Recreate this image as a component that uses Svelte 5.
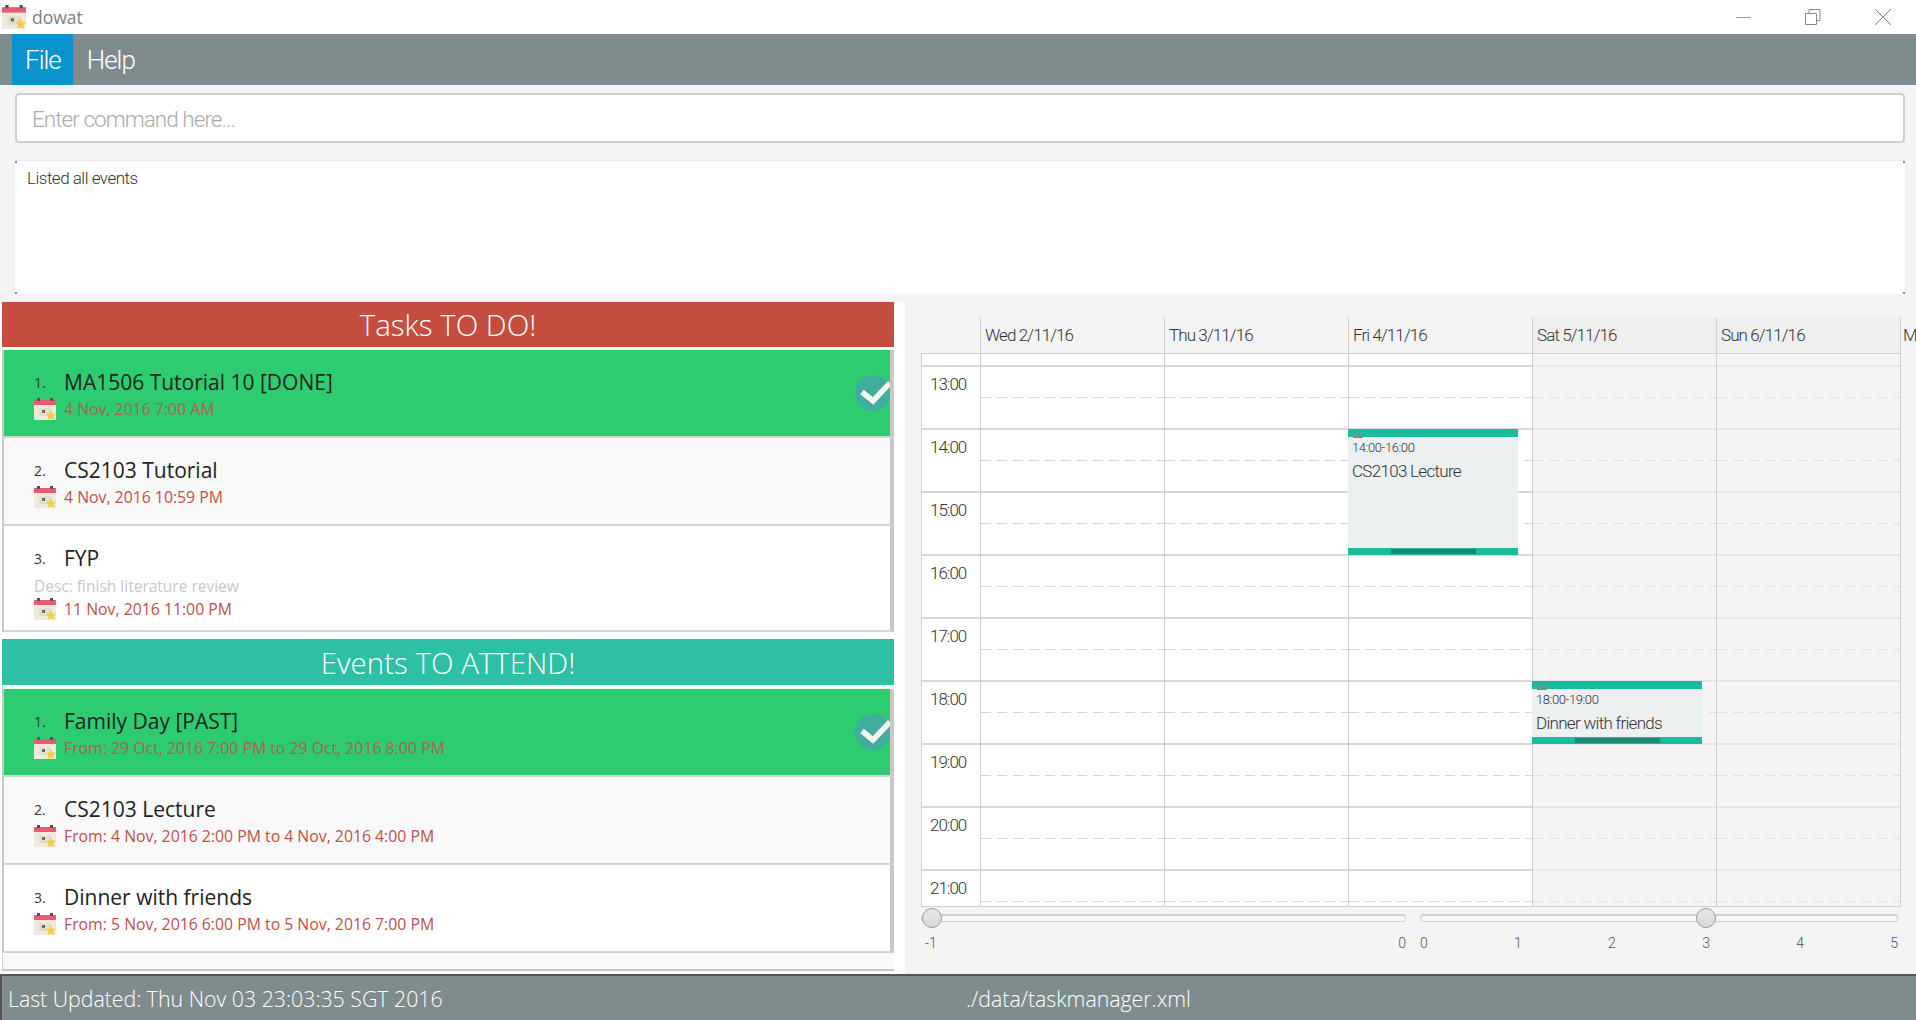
<script>
	const tasks = [
		{ n: 1, title: 'MA1506 Tutorial 10 [DONE]', date: '4 Nov, 2016 7:00 AM', done: true },
		{ n: 2, title: 'CS2103 Tutorial', date: '4 Nov, 2016 10:59 PM' },
		{ n: 3, title: 'FYP', desc: 'Desc: finish literature review', date: '11 Nov, 2016 11:00 PM' }
	];
	const events = [
		{ n: 1, title: 'Family Day [PAST]', date: 'From: 29 Oct, 2016 7:00 PM to 29 Oct, 2016 8:00 PM', done: true },
		{ n: 2, title: 'CS2103 Lecture', date: 'From: 4 Nov, 2016 2:00 PM to 4 Nov, 2016 4:00 PM' },
		{ n: 3, title: 'Dinner with friends', date: 'From: 5 Nov, 2016 6:00 PM to 5 Nov, 2016 7:00 PM' }
	];
	const days = [
		{ label: 'Wed 2/11/16' },
		{ label: 'Thu 3/11/16' },
		{ label: 'Fri 4/11/16' },
		{ label: 'Sat 5/11/16', weekend: true },
		{ label: 'Sun 6/11/16', weekend: true }
	];
	const hours = ['13:00', '14:00', '15:00', '16:00', '17:00', '18:00', '19:00', '20:00', '21:00'];
	const HOUR = 63;
	const DAY = 184;
	const appts = [
		{ day: 2, start: 1, span: 2, time: '14:00-16:00', title: 'CS2103 Lecture' },
		{ day: 3, start: 5, span: 1, time: '18:00-19:00', title: 'Dinner with friends' }
	];
</script>

{#snippet calIcon(size)}
	<svg class="cal" width={size} height={size} viewBox="0 0 22 22">
		<rect x="0" y="3" width="22" height="19" fill="#eeebdd" />
		<rect x="0" y="2" width="22" height="5" fill="#ea5a70" />
		<rect x="3" y="0" width="3" height="3" fill="#59504a" />
		<rect x="16" y="0" width="3" height="3" fill="#59504a" />
		<rect x="5" y="10" width="12" height="8" fill="#e3dfcf" />
		<rect x="8" y="12" width="3" height="3" fill="#6f6a5c" />
		<polygon points="17,12 18.6,15.4 22,16 19.6,18.4 20.2,22 17,20.3 13.8,22 14.4,18.4 12,16 15.4,15.4" fill="#f6cc4a" />
	</svg>
{/snippet}

{#snippet card(item)}
	<div class="card" class:done={item.done} class:even={item.n === 2}>
		<div class="head">
			<span class="num">{item.n}.</span>
			<span class="title">{item.title}</span>
		</div>
		{#if item.desc}
			<div class="desc">{item.desc}</div>
		{/if}
		<div class="when">
			{@render calIcon(22)}
			<span class="date">{item.date}</span>
		</div>
		{#if item.done}
			<div class="check">
				<svg width="36" height="36" viewBox="0 0 36 36">
					<path d="M7 17 L18 26 L35 8" fill="none" stroke="#f4f4f0" stroke-width="5.5" />
				</svg>
			</div>
		{/if}
	</div>
{/snippet}

<div class="app">
	<div class="titlebar">
		<div class="brand">
			{@render calIcon(24)}
			<span>dowat</span>
		</div>
		<div class="winctl">
			<svg width="16" height="16" viewBox="0 0 16 16"><path d="M0 8.5H15" stroke="#999" fill="none" /></svg>
			<svg width="16" height="16" viewBox="0 0 16 16"><path d="M0.5 4.5H11.5V15.5H0.5ZM4 4V0.5H15V11.5H12" stroke="#888" fill="none" /></svg>
			<svg width="18" height="18" viewBox="0 0 18 18"><path d="M1 1L17 17M17 1L1 17" stroke="#888" fill="none" /></svg>
		</div>
	</div>

	<div class="menubar">
		<span class="menu active">File</span>
		<span class="menu">Help</span>
	</div>

	<div class="command">
		<input placeholder="Enter command here..." />
	</div>
	<div class="result">Listed all events</div>

	<div class="main">
		<div class="lists">
			<div class="banner red">Tasks TO DO!</div>
			<div class="list">
				{#each tasks as t}
					{@render card(t)}
				{/each}
			</div>
			<div class="banner teal">Events TO ATTEND!</div>
			<div class="list last">
				{#each events as e}
					{@render card(e)}
				{/each}
			</div>
		</div>

		<div class="calendar">
			<div class="dayhead">
				{#each days as d}
					<div class="dayname" class:weekend={d.weekend}>{d.label}</div>
				{/each}
				<div class="dayname cut">M</div>
			</div>
			<div class="grid">
				<div class="timecol">
					<div class="lead"></div>
					{#each hours as h}
						<div class="hour">{h}</div>
					{/each}
				</div>
				{#each days as d}
					<div class="daycol" class:weekend={d.weekend}>
						<div class="lead"></div>
						{#each hours as h}
							<div class="slot"><i></i></div>
						{/each}
					</div>
				{/each}
				{#each appts as a}
					<div
						class="appt"
						style="left: {58 + a.day * DAY}px; top: {12 + a.start * HOUR}px; height: {a.span * HOUR}px"
					>
						<span class="grip"></span>
						<div class="atime">{a.time}</div>
						<div class="aname">{a.title}</div>
						<span class="handle"></span>
					</div>
				{/each}
			</div>
			<div class="sliders">
				<div class="slider">
					<div class="track"><span class="thumb" style="left: 0px"></span></div>
					<div class="ticks first"><span>-1</span><span>0</span></div>
				</div>
				<div class="slider">
					<div class="track"><span class="thumb" style="left: 275px"></span></div>
					<div class="ticks">
						{#each [0, 1, 2, 3, 4, 5] as n}
							<span>{n}</span>
						{/each}
					</div>
				</div>
			</div>
		</div>
	</div>

	<div class="status">
		<span>Last Updated: Thu Nov 03 23:03:35 SGT 2016</span>
		<span>./data/taskmanager.xml</span>
	</div>
</div>

<style>
	:global(body) {
		margin: 0;
		background: #f4f4f4;
	}

	.app {
		width: 1916px;
		height: 1020px;
		display: flex;
		flex-direction: column;
		overflow: hidden;
		background: #f4f4f4;
		font-family: 'Open Sans', sans-serif;
	}

	.titlebar {
		height: 34px;
		background: #fff;
		display: flex;
		justify-content: space-between;
		align-items: center;
		flex: none;
	}

	.brand {
		display: flex;
		align-items: center;
		gap: 6px;
		padding-left: 2px;
		font-size: 17.5px;
		color: #808080;
	}

	.winctl {
		display: flex;
		align-items: center;
		gap: 53px;
		padding-right: 24px;
	}

	.menubar {
		height: 51px;
		flex: none;
		background: #7f8c8d;
		display: flex;
		padding-left: 12px;
		font-family: Roboto, sans-serif;
		font-weight: 300;
		font-size: 26px;
		letter-spacing: -1px;
		color: #fff;
	}

	.menu {
		display: flex;
		align-items: center;
		padding: 1px 14px 0;
	}

	.menu.active {
		background: #0a93cd;
		padding: 1px 12px 0 13px;
	}

	.command {
		flex: none;
		padding: 8px 11px 0 15px;
	}

	.command input {
		box-sizing: border-box;
		display: block;
		width: 100%;
		height: 50px;
		border: 2px solid #cfcfcf;
		border-radius: 4px;
		background: #fff;
		padding: 2px 15px 0;
		outline: none;
		font-family: Roboto, sans-serif;
		font-weight: 300;
		font-size: 22.5px;
		letter-spacing: -0.95px;
	}

	.command input::placeholder {
		color: #ababab;
		opacity: 1;
	}

	.result {
		flex: none;
		box-sizing: border-box;
		height: 134px;
		margin: 17px 11px 0 15px;
		padding: 7px 12px;
		background:
			linear-gradient(#8a8a8a, #8a8a8a) 0 0 / 2px 2px no-repeat,
			linear-gradient(#8a8a8a, #8a8a8a) 100% 0 / 2px 2px no-repeat,
			linear-gradient(#8a8a8a, #8a8a8a) 0 100% / 2px 2px no-repeat,
			linear-gradient(#8a8a8a, #8a8a8a) 100% 100% / 2px 2px no-repeat,
			#fff;
		border-top: 1px solid #eaeaea;
		font-family: Roboto, sans-serif;
		font-weight: 300;
		font-size: 17px;
		letter-spacing: -0.5px;
		color: #333;
	}

	.main {
		flex: 1;
		min-height: 0;
		display: flex;
	}

	.lists {
		width: 905px;
		flex: none;
		box-sizing: border-box;
		margin-top: 8px;
		padding: 0 11px 0 2px;
		background: #fff;
	}

	.banner {
		height: 45px;
		display: flex;
		align-items: center;
		justify-content: center;
		color: #fff;
		font-size: 29.5px;
		font-weight: 300;
	}

	.red {
		background: #c44d40;
	}

	.teal {
		height: 46px;
		background: #2ec0a4;
	}

	.list {
		padding-top: 3px;
		margin-bottom: 7px;
		background: #fff;
	}

	.list.last {
		margin-bottom: 0;
		padding-top: 4px;
		height: 286px;
		box-sizing: border-box;
		background: #f9f9f9;
		border-left: 1px solid #d0d0d0;
		border-bottom: 2px solid #c8c8c8;
	}

	.card {
		position: relative;
		box-sizing: border-box;
		min-height: 88px;
		padding: 17px 0 9px 30px;
		background: #fff;
		border-left: 2px solid #c8c8c8;
		border-right: 4px solid #c8c8c8;
		border-bottom: 2px solid #d4d4d4;
		overflow: hidden;
	}

	.list.last .card {
		margin-left: -1px;
	}

	.card.even {
		background: #f9f9f9;
	}

	.card.done {
		background: #2ecc71;
	}

	.head {
		display: flex;
		align-items: center;
		height: 30px;
	}

	.num {
		width: 30px;
		font-size: 14px;
		color: #333;
	}

	.title {
		font-size: 21px;
		color: #222;
	}

	.desc {
		height: 24px;
		line-height: 26px;
		font-size: 15.5px;
		color: #c8c8c8;
	}

	.when {
		display: flex;
		align-items: center;
		gap: 8px;
		height: 24px;
	}

	.cal {
		display: block;
		flex: none;
	}

	.date {
		font-size: 15.8px;
		color: #c0504a;
	}

	.done .date {
		color: #a4674d;
	}

	.check {
		position: absolute;
		right: -1px;
		top: 25px;
		width: 36px;
		height: 36px;
		border-radius: 50%;
		background: #3fae9c;
	}

	.check svg {
		display: block;
	}

	.calendar {
		flex: 1;
		min-width: 0;
		padding: 23px 0 0 16px;
		font-family: Roboto, sans-serif;
		font-weight: 300;
	}

	.dayhead {
		display: flex;
		height: 36px;
		padding-left: 59px;
		white-space: nowrap;
	}

	.dayname {
		box-sizing: border-box;
		width: 184px;
		flex: none;
		padding: 8px 0 0 4px;
		border-left: 1px solid #d0d0d0;
		font-size: 17px;
		letter-spacing: -0.9px;
		color: #333;
	}

	.dayname.weekend {
		background: #efefef;
	}

	.dayname.cut {
		width: 15px;
		padding-left: 2px;
	}

	.grid {
		position: relative;
		display: flex;
		width: 980px;
		box-sizing: border-box;
		height: 554px;
		border: 1px solid #cfcfcf;
		background: #fff;
		overflow: hidden;
	}

	.timecol {
		width: 58px;
		flex: none;
	}

	.lead {
		height: 11px;
		border-bottom: 2px solid #d8d8d8;
	}

	.hour {
		box-sizing: border-box;
		height: 63px;
		padding: 7px 0 0 8px;
		border-bottom: 2px solid #d8d8d8;
		font-size: 17px;
		letter-spacing: -1px;
		color: #333;
	}

	.daycol {
		box-sizing: border-box;
		width: 184px;
		flex: none;
		border-left: 1px solid #d0d0d0;
	}

	.daycol.weekend {
		background: #f4f4f4;
	}

	.daycol.weekend .lead,
	.daycol.weekend .slot {
		border-bottom-color: #e6e6e6;
	}

	.slot {
		box-sizing: border-box;
		height: 63px;
		padding-top: 30px;
		border-bottom: 2px solid #d8d8d8;
	}

	.slot i {
		display: block;
		height: 1px;
		background: repeating-linear-gradient(90deg, #d6d6d6 0 10px, transparent 10px 16px);
	}

	.weekend .slot i {
		background: repeating-linear-gradient(90deg, #e2e2e2 0 10px, transparent 10px 16px);
	}

	.appt {
		position: absolute;
		box-sizing: border-box;
		width: 170px;
		padding: 3px 0 0 4px;
		background: #ecf0f1;
		border-top: 8px solid #1abc9c;
		border-bottom: 7px solid #1abc9c;
		color: #333;
	}

	.grip {
		position: absolute;
		left: 5px;
		top: -3px;
		width: 10px;
		height: 4px;
		background: #5f9c8f;
	}

	.handle {
		position: absolute;
		left: 43px;
		bottom: -6px;
		width: 85px;
		height: 5px;
		background: #168a72;
	}

	.atime {
		font-size: 13px;
		letter-spacing: -0.4px;
		line-height: 16px;
	}

	.aname {
		margin-top: 4px;
		font-size: 17px;
		letter-spacing: -0.7px;
		line-height: 22px;
	}

	.sliders {
		display: flex;
		gap: 14px;
		width: 977px;
		margin-top: 4px;
	}

	.slider {
		flex: none;
		width: 485px;
	}

	.slider + .slider {
		width: 478px;
	}

	.track {
		position: relative;
		box-sizing: border-box;
		height: 8px;
		margin-top: 3px;
		border: 1px solid #cfcfcf;
		border-top-width: 2px;
		border-radius: 4px;
		background: #f7f7f7;
	}

	.thumb {
		position: absolute;
		top: -8px;
		width: 20px;
		height: 20px;
		box-sizing: border-box;
		border: 1px solid #9a9a9a;
		border-radius: 50%;
		background: linear-gradient(#e8e8e8, #d8d8d8);
	}

	.ticks {
		display: flex;
		justify-content: space-between;
		padding: 13px 0 0;
		font-size: 14px;
		color: #555;
	}

	.ticks.first {
		padding-left: 4px;
	}

	.status {
		height: 46px;
		flex: none;
		box-sizing: border-box;
		display: grid;
		grid-template-columns: 958px 958px;
		align-items: center;
		background: #7f8c8d;
		border-top: 2px solid #555;
		border-left: 2px solid #555;
		color: #fff;
		font-size: 21.3px;
		font-weight: 300;
	}

	.status span {
		padding-left: 6px;
	}
</style>
